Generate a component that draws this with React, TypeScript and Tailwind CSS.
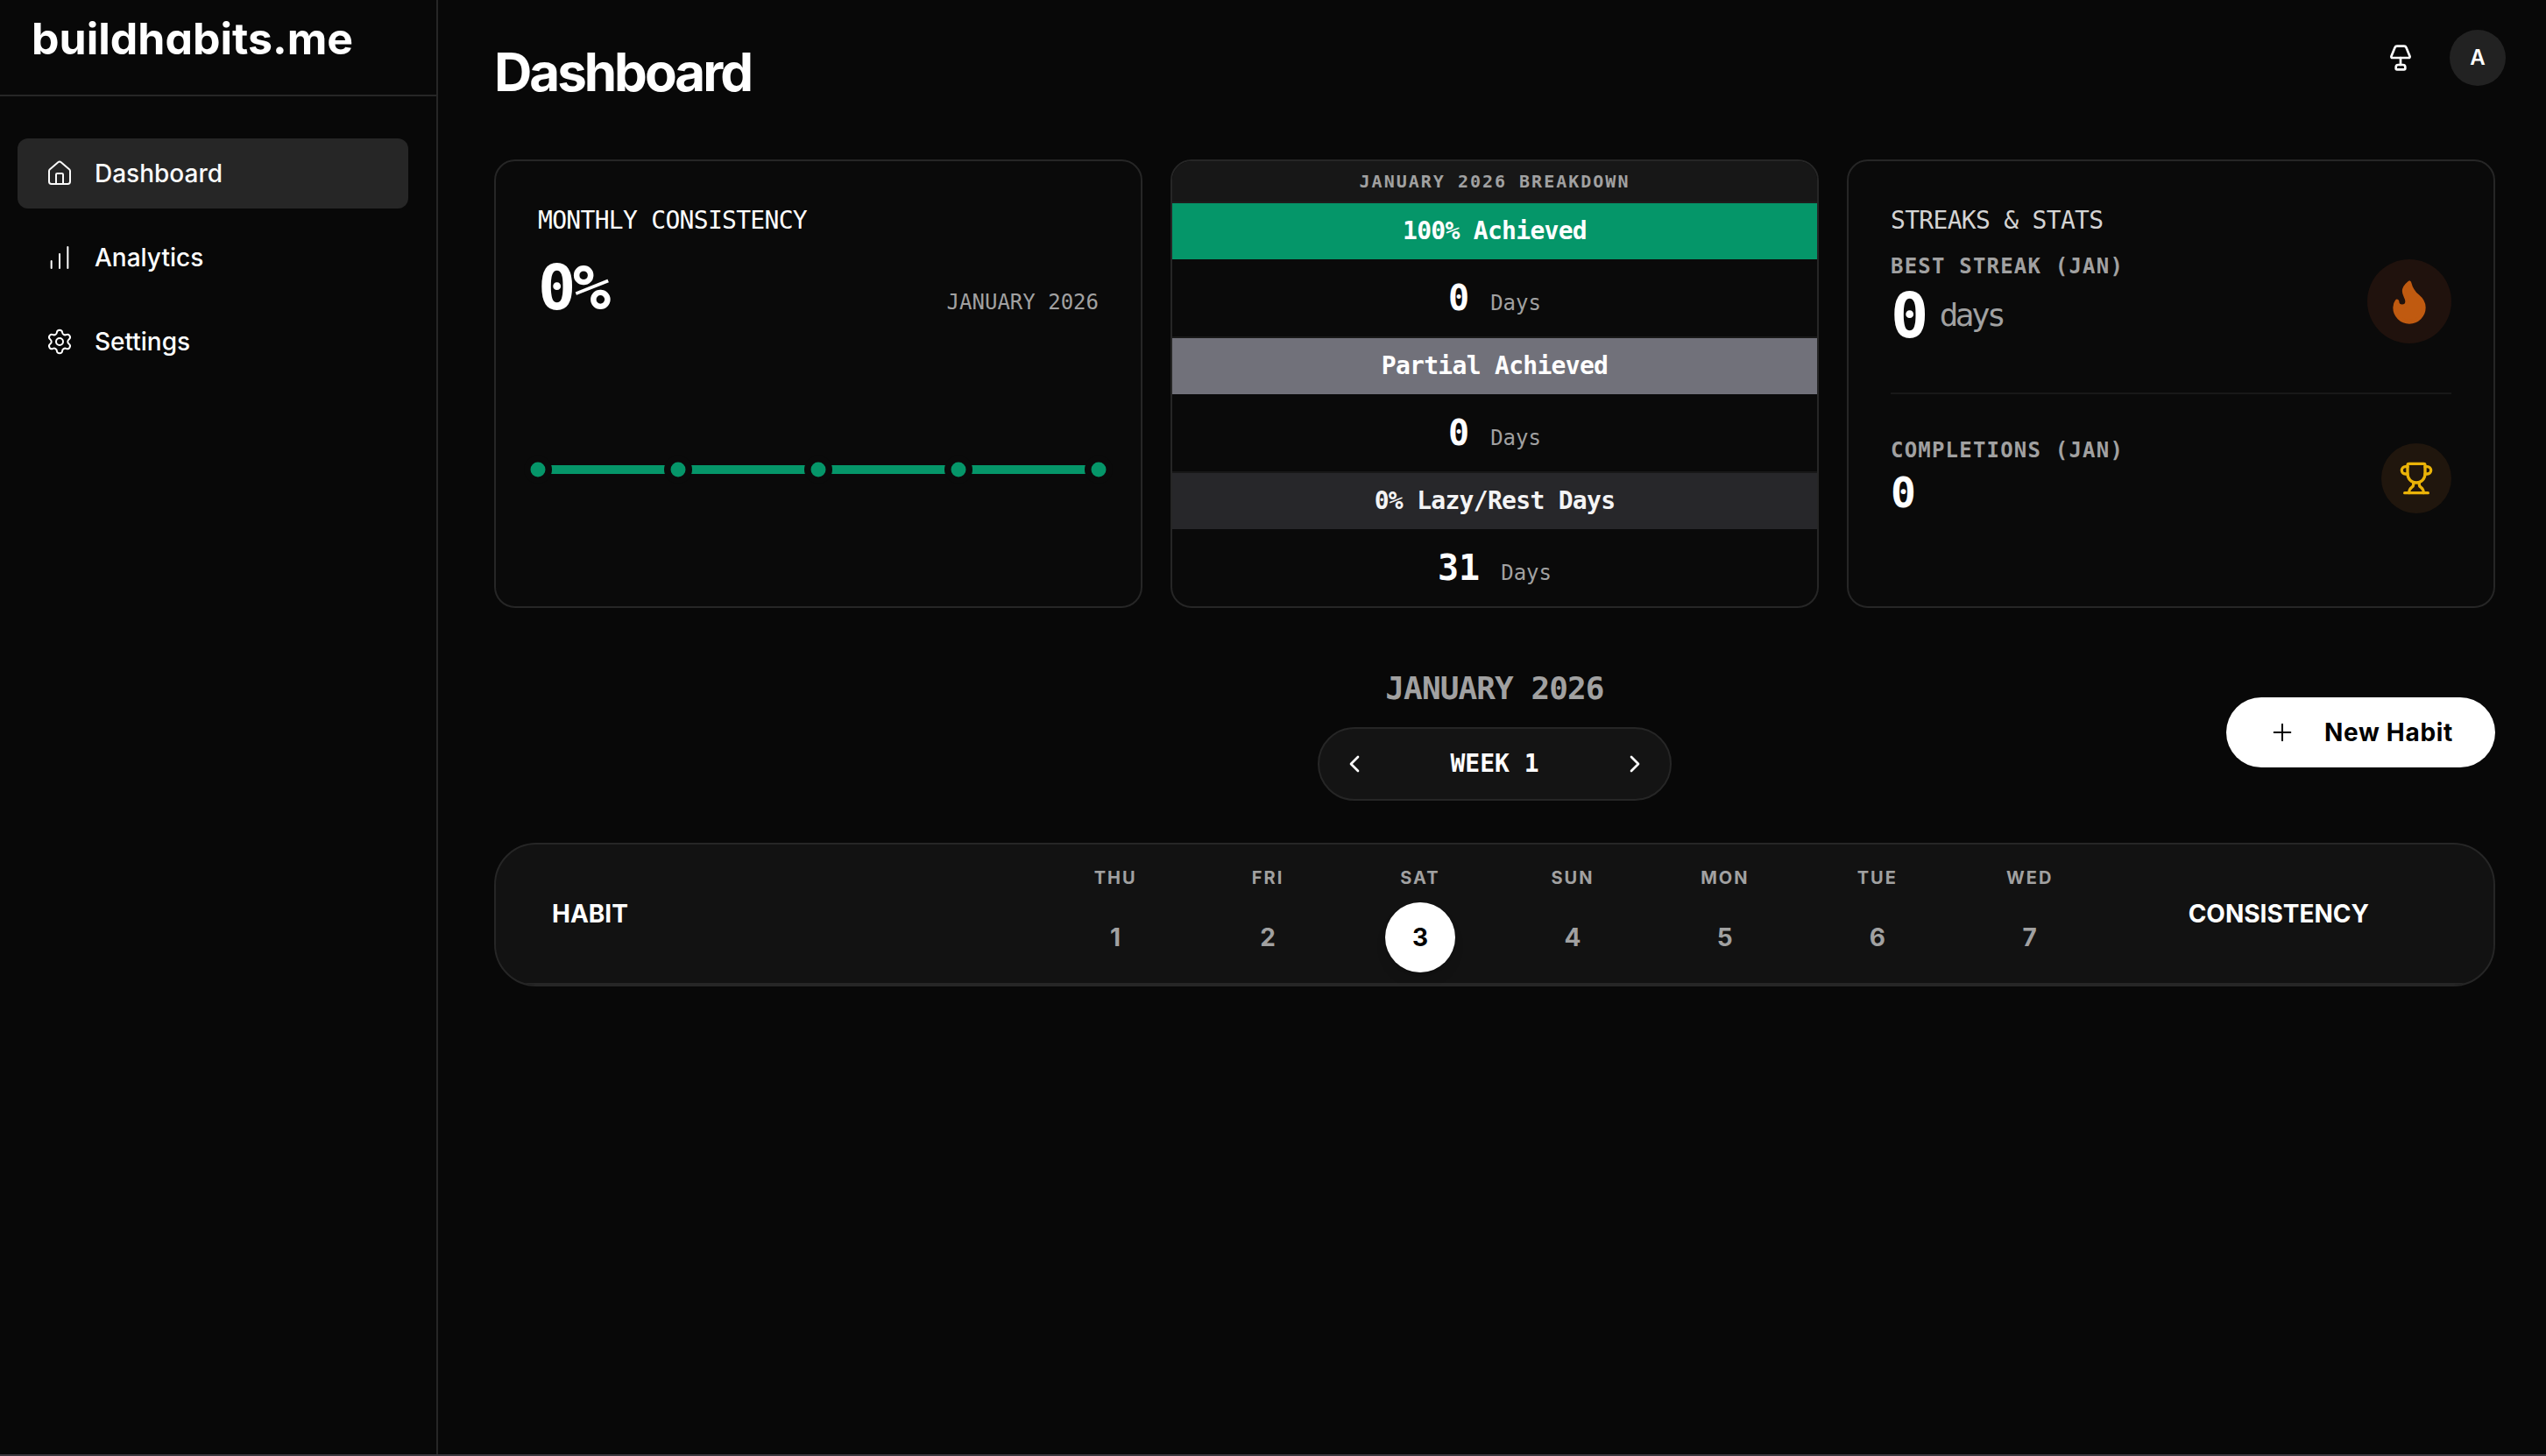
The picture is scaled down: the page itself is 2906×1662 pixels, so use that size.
import React from "react";
import {
  ChartNoAxesColumnIncreasing,
  ChevronLeft,
  ChevronRight,
  Flame,
  House,
  Lamp,
  Plus,
  Settings,
  Trophy,
} from "lucide-react";

const navItems = [
  { label: "Dashboard", icon: House, active: true },
  { label: "Analytics", icon: ChartNoAxesColumnIncreasing, active: false },
  { label: "Settings", icon: Settings, active: false },
];

const breakdown = [
  { label: "100% Achieved", days: 0, band: "bg-[#059669] text-white" },
  { label: "Partial Achieved", days: 0, band: "bg-[#71717a] text-white" },
  { label: "0% Lazy/Rest Days", days: 31, band: "bg-[#27272a] text-zinc-100" },
];

const week = [
  { name: "THU", date: 1 },
  { name: "FRI", date: 2 },
  { name: "SAT", date: 3 },
  { name: "SUN", date: 4 },
  { name: "MON", date: 5 },
  { name: "TUE", date: 6 },
  { name: "WED", date: 7 },
];
const today = 3;

const mono = "font-['DejaVu_Sans_Mono',monospace] slashed-zero";
const card = "rounded-3xl border-2 border-[#262626] bg-[#0a0a0a]";

function Sidebar() {
  return (
    <aside className="w-[500px] shrink-0 border-r-2 border-[#262626]">
      <div className="h-[110px] border-b-2 border-[#262626] pl-9 pt-3">
        <a href="#" className="text-[50px] leading-[64px] font-bold [font-feature-settings:'cv11']">
          buildhabits.me
        </a>
      </div>
      <nav className="flex flex-col gap-4 pt-12 pl-5 pr-8">
        {navItems.map(({ label, icon: Icon, active }) => (
          <a
            key={label}
            href="#"
            className={
              active
                ? "flex h-20 items-center gap-6 rounded-xl bg-[#262626] px-8 text-[28px] font-medium text-neutral-50"
                : "flex h-20 items-center gap-6 rounded-xl px-8 text-[28px] font-medium"
            }
          >
            <Icon className="size-8" strokeWidth={1.5} />
            {label}
          </a>
        ))}
      </nav>
    </aside>
  );
}

function ConsistencyChart() {
  const stops = ["0%", "25%", "50%", "75%", "100%"];
  return (
    <svg className="h-8 w-full overflow-visible" role="img" aria-label="Weekly consistency">
      <line x1="0%" y1="16" x2="100%" y2="16" stroke="#059669" strokeWidth="10" />
      {stops.map((x) => (
        <g key={x}>
          <circle cx={x} cy="16" r="16" fill="#0a0a0a" />
          <circle cx={x} cy="16" r="8.5" fill="#059669" />
        </g>
      ))}
    </svg>
  );
}

function MonthlyCard() {
  return (
    <section className={`${card} ${mono} flex flex-col p-12`}>
      <h2 className="text-[28px] leading-10 tracking-tight">MONTHLY CONSISTENCY</h2>
      <div className="mt-4 flex items-baseline justify-between">
        <span className="text-[72px] leading-[80px] font-bold tracking-tighter">0%</span>
        <span className="text-[24px] text-[#a1a1a1]">JANUARY 2026</span>
      </div>
      <div className="flex flex-1 items-center pt-15">
        <ConsistencyChart />
      </div>
    </section>
  );
}

function BreakdownCard() {
  return (
    <section className={`${card} ${mono} overflow-hidden text-center`}>
      <h2 className="h-12 border-b-2 border-[#1d1d1d] bg-[#171717] text-[20px] leading-[46px] font-bold tracking-widest text-[#a1a1a1]">
        JANUARY 2026 BREAKDOWN
      </h2>
      <div className="divide-y-2 divide-[#181818]">
        {breakdown.map(({ label, days, band }) => (
          <div key={label}>
            <h3 className={`${band} text-[28px] leading-[64px] font-bold tracking-tight`}>{label}</h3>
            <p className="flex h-[88px] items-baseline justify-center gap-6 leading-[88px]">
              <span className="text-[40px] font-bold">{days}</span>
              <span className="text-[24px] text-[#a1a1a1]">Days</span>
            </p>
          </div>
        ))}
      </div>
    </section>
  );
}

function StreaksCard() {
  return (
    <section className={`${card} ${mono} p-12`}>
      <h2 className="text-[28px] leading-10 tracking-tight text-[#d4d4d4]">STREAKS &amp; STATS</h2>
      <div className="mt-4 flex items-center justify-between border-b-2 border-[#181818] pb-12">
        <div>
          <h3 className="text-[24px] leading-8 font-bold tracking-wider text-[#a1a1a1]">BEST STREAK (JAN)</h3>
          <p className="flex items-center gap-4 text-[72px] leading-[80px] font-bold tracking-tighter">
            0<span className="text-[36px] leading-10 font-normal text-[#a1a1a1]">days</span>
          </p>
        </div>
        <div className="grid size-24 place-items-center rounded-full bg-[#20120d]">
          <Flame className="size-14 fill-[#c05a10] text-[#c05a10]" />
        </div>
      </div>
      <div className="flex items-center justify-between pt-12">
        <div>
          <h3 className="text-[24px] leading-8 font-bold tracking-wider text-[#a1a1a1]">COMPLETIONS (JAN)</h3>
          <p className="text-[48px] leading-[64px] font-bold">0</p>
        </div>
        <div className="grid size-20 place-items-center rounded-full bg-[#20160d]">
          <Trophy className="size-10 text-[#eab308]" />
        </div>
      </div>
    </section>
  );
}

function WeekBar() {
  return (
    <section className="mt-16 grid grid-cols-[1fr_auto_1fr] items-center">
      <div className={`${mono} col-start-2 flex flex-col gap-4 text-center font-bold`}>
        <h2 className="text-[36px] leading-[56px] tracking-tight text-[#a1a1a1]">JANUARY 2026</h2>
        <div className="flex w-[404px] items-center rounded-full border-2 border-[#262626] bg-[#141414] p-2">
          <button type="button" aria-label="Previous week" className="grid size-16 place-items-center rounded-full">
            <ChevronLeft className="size-8" />
          </button>
          <span className="flex-1 text-[28px]">WEEK 1</span>
          <button type="button" aria-label="Next week" className="grid size-16 place-items-center rounded-full">
            <ChevronRight className="size-8" />
          </button>
        </div>
      </div>
      <button
        type="button"
        className="flex h-20 items-center gap-8 justify-self-end rounded-full bg-white px-12 text-[28px] font-bold tracking-wide text-black"
      >
        <Plus className="size-8" strokeWidth={1.5} />
        New Habit
      </button>
    </section>
  );
}

function HabitTable() {
  return (
    <div className="mt-12 overflow-hidden rounded-[48px] border-2 border-[#262626] bg-[#121212]">
      <table className="w-full table-fixed border-b-2 border-[#262626] text-[28px] font-bold">
        <thead>
          <tr>
            <th scope="col" className="w-[27.2%] pl-16 text-left">
              HABIT
            </th>
            {week.map(({ name, date }) => (
              <th key={name} scope="col" className="pt-6 pb-3">
                <div className="flex flex-col items-center gap-3.5 text-[#a1a1a1]">
                  <span className="text-[20px] leading-7 tracking-widest">{name}</span>
                  <span
                    className={
                      date === today
                        ? "grid size-20 place-items-center rounded-full bg-white text-black shadow-lg"
                        : "grid size-20 place-items-center"
                    }
                  >
                    {date}
                  </span>
                </div>
              </th>
            ))}
            <th scope="col" className="w-[19.4%] pr-12">
              CONSISTENCY
            </th>
          </tr>
        </thead>
      </table>
    </div>
  );
}

export default function App() {
  return (
    <div className="flex min-h-screen border-b-2 border-[#3a363d] bg-[#080808] font-['Inter',sans-serif] text-white">
      <Sidebar />
      <div className="flex-1">
        <header className="flex items-start justify-between pt-[34px] pr-[46px] pb-[68px] pl-16">
          <h1 className="mt-4 text-6xl leading-[64px] font-bold tracking-tighter">Dashboard</h1>
          <div className="flex items-center gap-10">
            <button type="button" aria-label="Toggle theme">
              <Lamp className="size-8" />
            </button>
            <button type="button" className="size-16 rounded-full bg-[#222222] text-[24px] font-semibold">
              A
            </button>
          </div>
        </header>
        <main className="pr-[58px] pl-16">
          <div className="grid grid-cols-3 gap-8">
            <MonthlyCard />
            <BreakdownCard />
            <StreaksCard />
          </div>
          <WeekBar />
          <HabitTable />
        </main>
      </div>
    </div>
  );
}
